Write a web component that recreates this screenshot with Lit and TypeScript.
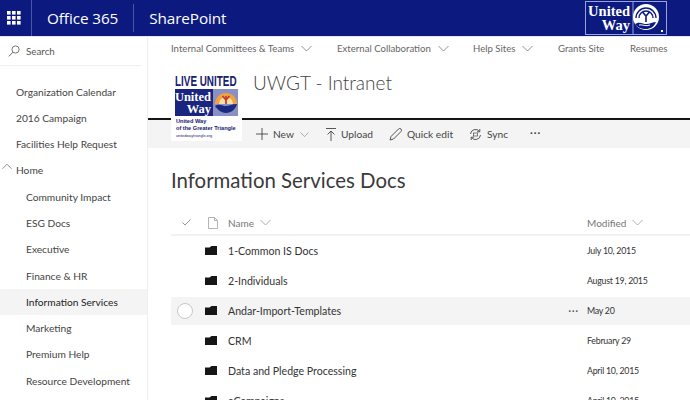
import { LitElement, html, css, svg } from "lit";
import { customElement } from "lit/decorators.js";

const chev = (w = 11) => html`<svg class="chev" width=${w} height="7" viewBox="0 0 11 7"><path d="M.5 1l5 5 5-5" fill="none" stroke="currentColor" stroke-width=".8"/></svg>`;
const folder = html`<svg class="folder" width="12" height="9" viewBox="0 0 12 9"><path d="M0 1.500h4.500L6.500 0H12v9H0z" fill="#161616"/></svg>`;

const nav = [
  ["Organization Calendar", 0], ["2016 Campaign", 0], ["Facilities Help Request", 0], ["Home", 2],
  ["Community Impact", 1], ["ESG Docs", 1], ["Executive", 1], ["Finance & HR", 1],
  ["Information Services", 3], ["Marketing", 1], ["Premium Help", 1], ["Resource Development", 1],
] as [string, number][];

const rows = [
  ["1-Common IS Docs", "July 10, 2015"], ["2-Individuals", "August 19, 2015"], ["Andar-Import-Templates", "May 20"],
  ["CRM", "February 29"], ["Data and Pledge Processing", "April 10, 2015"], ["eCampaigns", "April 10, 2015"],
];

@customElement("app-root")
export class AppRoot extends LitElement {
  static styles = css`
    :host { display: block; width: 690px; height: 400px; overflow: hidden; background: #fff; font-family: Lato, "Open Sans", sans-serif; color: #333; }
    .top { height: 36px; background: #0c1a80; color: #fff; display: flex; align-items: center; border-bottom: 1px solid #e8e8ee; box-sizing: content-box; font-family: "Open Sans", sans-serif; }
    .waffle { width: 32px; height: 36px; display: flex; align-items: center; justify-content: center; border-right: 1px solid #4a55a5; box-sizing: border-box; }
    .waffle svg { margin-left: -4px; }
    .brand { font-size: 15.3px; letter-spacing: -.1px; padding: 0 15px; height: 28px; line-height: 28px; }
    .office { border-right: 1px solid #4a55a5; }
    .top .spacer { flex: 1; }
    .uw { margin-right: 23px; height: 34px; display: flex; }
    .body { display: flex; height: 363px; }
    .side { width: 148px; flex: none; border-right: 1px solid #efefef; box-sizing: border-box; }
    .search { height: 28px; margin: 0 6px 0 0; padding-left: 8px; display: flex; align-items: center; gap: 6px; font-size: 9.8px; color: #555; border-bottom: 1px solid #f0f0f0; }
    .navlist { margin-top: 12.5px; }
    .item { height: 26.3px; line-height: 27px; font-size: 10.2px; color: #444; padding-left: 16px; white-space: nowrap; position: relative; }
    .item.sub { padding-left: 26px; }
    .item.on { background: #f4f4f4; color: #222; padding-left: 26px; }
    .item .up { position: absolute; left: 2px; top: 6px; height: 7px; line-height: 0; display: flex; color: #666; transform: rotate(180deg); }
    .main { flex: 1; min-width: 0; }
    .links { height: 23px; display: flex; align-items: center; font-size: 9.6px; color: #666; padding-left: 23px; white-space: nowrap; }
    .links span { display: inline-flex; align-items: center; gap: 7px; }
    .links .chev { color: #777; }
    .l1 { width: 166px; } .l2 { width: 136px; } .l3 { width: 85px; } .l4 { width: 72px; }
    .site { display: flex; align-items: flex-start; padding: 10px 0 0 23px; height: 58px; box-sizing: border-box; position: relative; z-index: 1; }
    .logo { width: 71px; height: 71px; background: #fff; flex: none; display: block; }
    .sitename { font-size: 19px; font-weight: 300; color: #444; margin: 1px 0 0 11px; white-space: nowrap; }
    .cmd { height: 28px; border-top: 2px solid #151515; background: #f4f4f4; display: flex; align-items: center; padding-left: 108px; font-size: 10.2px; color: #444; white-space: nowrap; box-sizing: content-box; }
    .cmd span { display: inline-flex; align-items: center; gap: 5px; }
    .cmd .chev { color: #888; margin-left: 1px; }
    .c1 { width: 70px; } .c2 { width: 63px; } .c3 { width: 80px; } .c4 { width: 61px; }
    .dots { letter-spacing: 1px; font-weight: 700; font-size: 10px; margin-top: -5px; }
    h1 { font-size: 20.4px; font-weight: 400; color: #3a3a3a; margin: 0; padding: 18px 0 0 23px; height: 52px; box-sizing: border-box; line-height: 28px; white-space: nowrap; }
    .hdr, .row { display: grid; grid-template-columns: 34px 23px 359px 1fr; align-items: center; margin-left: 23px; }
    .hdr { height: 36px; padding-top: 11px; font-size: 10px; color: #777; border-bottom: 2px solid #f2f2f2; box-sizing: border-box; }
    .hdr .txt { display: inline-flex; align-items: center; gap: 6px; }
    .hdr .chev { color: #999; }
    .ck { margin-left: 11px; }
    .file { margin-left: 3px; }
    .row { height: 30px; font-size: 10.6px; color: #333; white-space: nowrap; padding: 1px 0; box-sizing: border-box; }
    .row.hov { background: #f4f4f4; height: 28px; margin-top: 1px; margin-bottom: 1px; padding: 0; }
    .circ { width: 16px; height: 16px; border: 1px solid #c8c8c8; border-radius: 50%; background: #fff; box-sizing: border-box; margin-left: 6px; }
    .folder { display: block; margin-bottom: 2px; }
    .name { position: relative; padding-bottom: 1px; }
    .date { font-size: 8.8px; letter-spacing: -.25px; color: #333; padding-bottom: 1px; }
    .more { position: absolute; right: 8px; top: 50%; transform: translateY(-50%); color: #555; font-size: 9px; font-weight: 700; letter-spacing: 1px; margin-top: -1px; }
    svg text { font-family: "Liberation Serif", serif; }
    .logo text.s { font-family: "Liberation Sans", sans-serif; }
  `;

  render() {
    return html`
      <div class="top">
        <div class="waffle">
          <svg width="14" height="14" viewBox="0 0 14 14" fill="#fff">
            ${[0, 5, 10].flatMap((x) => [0, 5, 10].map((y) => svg`<rect x=${x} y=${y} width="3.6" height="3.6"/>`))}
          </svg>
        </div>
        <div class="brand office">Office 365</div>
        <div class="brand">SharePoint</div>
        <div class="spacer"></div>
        <svg class="uw" width="82" height="34" viewBox="0 0 82 34">
          <rect x=".5" y=".5" width="81" height="33" fill="#0c1a80" stroke="#9aa3d8"/>
          <path d="M48 .5V33.500" stroke="#9aa3d8"/>
          <text x="45" y="15" text-anchor="end" fill="#fff" font-size="14.500" font-weight="700">United</text>
          <text x="45" y="29" text-anchor="end" fill="#fff" font-size="14.500" font-weight="700">Way</text>
          <circle cx="61" cy="16" r="13" fill="#fff"/>
          <path d="M51 17a10 10 0 0 1 20 0" fill="none" stroke="#0c1a80" stroke-width="1.400"/>
          <path d="M54 17a7 7 0 0 1 14 0" fill="none" stroke="#0c1a80" stroke-width="1.400"/>
          <path d="M57.500 11l3.500 4 3.500-4M61 15v6" fill="none" stroke="#0c1a80" stroke-width="1.600"/>
          <path d="M50 23c5-3 8 0 11 0 4 0 7-2 10-2-2 5-6 7-10 7-5 0-9-2-11-5z" fill="#0c1a80"/>
          <path d="M54 24c3-1 7 2 11 0" fill="none" stroke="#fff" stroke-width="1"/>
          <rect x="76" y="29" width="2" height="2" fill="#fff"/>
        </svg>
      </div>
      <div class="body">
        <div class="side">
          <div class="search">
            <svg width="12" height="12" viewBox="0 0 12 12"><circle cx="7.500" cy="4.500" r="3.600" fill="none" stroke="#555" stroke-width=".8"/><path d="M5 7.200L.8 11.400" stroke="#555" stroke-width=".9"/></svg>
            Search
          </div>
          <div class="navlist">
            ${nav.map(([t, k]) => html`<div class="item ${k === 1 ? "sub" : ""} ${k === 3 ? "on" : ""}">${k === 2 ? html`<span class="up">${chev(10)}</span>` : ""}${t}</div>`)}
          </div>
        </div>
        <div class="main">
          <div class="links">
            <span class="l1">Internal Committees &amp; Teams ${chev()}</span>
            <span class="l2">External Collaboration ${chev()}</span>
            <span class="l3">Help Sites ${chev()}</span>
            <span class="l4">Grants Site</span>
            <span>Resumes</span>
          </div>
          <div class="site">
            <svg class="logo" viewBox="0 0 71 71">
              <rect width="71" height="71" fill="#fff"/>
              <text class="s" transform="translate(4 16) scale(.9 1.27)" font-size="11" font-weight="700" fill="#15206f">LIVE UNITED</text>
              <rect x="4" y="19" width="63" height="27" fill="#1a2580"/>
              <rect x="42" y="19" width="25" height="27" fill="#8b90c4"/>
              <path d="M44 34a11 11 0 0 1 22 0z" fill="#f0a33a"/>
              <path d="M48 34a7 7 0 0 1 14 0z" fill="#f7e0b0"/>
              <path d="M55 26v8M51.500 26l3.500 4 3.500-4" stroke="#c8382a" stroke-width="1.700" fill="none"/>
              <path d="M44 36c4-3 8 0 11 0 3 0 6-2 11-2-1 5-6 9-11 9-5 0-9-4-11-7z" fill="#1a2a80"/>
              <text x="40" y="31" text-anchor="end" font-size="12.500" font-weight="700" fill="#fff">United</text>
              <text x="40" y="43" text-anchor="end" font-size="12.500" font-weight="700" fill="#fff">Way</text>
              <text class="s" x="5" y="52.500" font-size="5.600" font-weight="700" fill="#15206f">United Way</text>
              <text class="s" x="5" y="60" font-size="5.600" font-weight="700" fill="#15206f">of the Greater Triangle</text>
              <text class="s" x="5" y="66.500" font-size="3.800" fill="#15206f">unitedwaytriangle.org</text>
            </svg>
            <div class="sitename">UWGT - Intranet</div>
          </div>
          <div class="cmd">
            <span class="c1"><svg width="12" height="12" viewBox="0 0 12 12"><path d="M6 0v12M0 6h12" stroke="#444" stroke-width=".9"/></svg>New ${chev(9)}</span>
            <span class="c2"><svg width="10" height="13" viewBox="0 0 10 13"><path d="M0 .5h10M5 13V3M1.500 6.500L5 3l3.500 3.500" fill="none" stroke="#444" stroke-width=".9"/></svg>Upload</span>
            <span class="c3"><svg width="13" height="13" viewBox="0 0 13 13"><path d="M1 12l1-3.500L9.500 1a1.300 1.300 0 0 1 2.500 2.500L4.500 11z" fill="none" stroke="#444" stroke-width=".9"/></svg>Quick edit</span>
            <span class="c4"><svg width="13" height="13" viewBox="0 0 13 13"><path d="M1.500 6a5 5 0 0 1 9-2.500M11.500 7a5 5 0 0 1-9 2.500M10.800 1v2.800H8M2.200 12V9.200H5" fill="none" stroke="#444" stroke-width=".9"/><rect x="4.500" y="5" width="4" height="3" fill="none" stroke="#444" stroke-width=".7"/></svg>Sync</span>
            <span class="dots">···</span>
          </div>
          <h1>Information Services Docs</h1>
          <div class="hdr">
            <svg class="ck" width="9" height="7" viewBox="0 0 9 7"><path d="M.5 3.500L3 6 8.500.5" fill="none" stroke="#888" stroke-width=".9"/></svg>
            <svg class="file" width="10" height="12" viewBox="0 0 10 12"><path d="M.5.500h6l3 3v8H.5zM6.500.500v3h3" fill="none" stroke="#aaa" stroke-width=".9"/></svg>
            <span class="txt">Name ${chev()}</span>
            <span class="txt">Modified ${chev()}</span>
          </div>
          ${rows.map(([n, d], i) => html`
            <div class="row ${i === 2 ? "hov" : ""}">
              ${i === 2 ? html`<div class="circ"></div>` : html`<div></div>`}
              ${folder}
              <div class="name">${n}${i === 2 ? html`<span class="more">···</span>` : ""}</div>
              <div class="date">${d}</div>
            </div>`)}
        </div>
      </div>
    `;
  }
}
